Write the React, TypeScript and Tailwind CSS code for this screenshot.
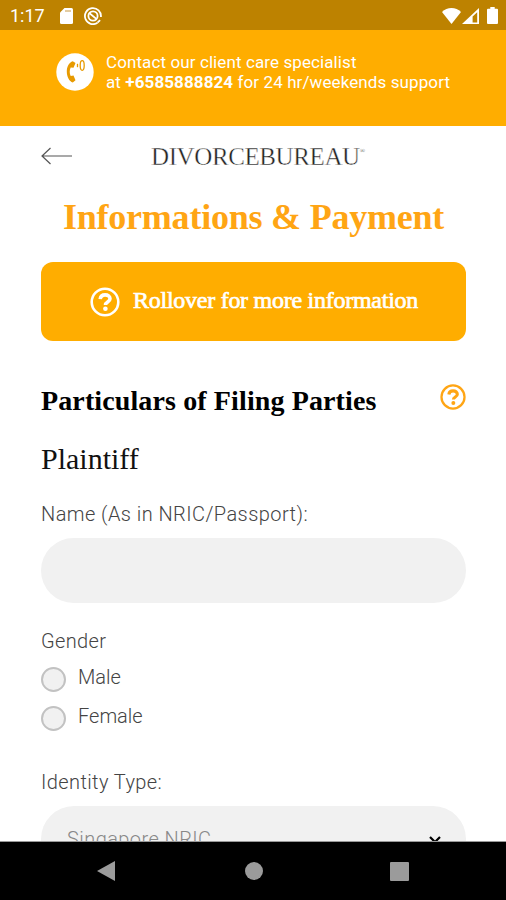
const HelpIcon = ({ className }: { className: string }) => (
  <svg viewBox="0 0 30 30" fill="none" stroke="currentColor" className={className}>
    <circle cx="15" cy="15" r="13.3" strokeWidth="2.6" />
    <path d="M10.2 12.1c.3-2.7 2.2-4.2 4.9-4.2 2.8 0 4.9 1.6 4.9 3.9 0 3.4-4.5 3.1-4.5 6.2" strokeWidth="3.6" />
    <circle cx="15.4" cy="21.8" r="2.3" fill="currentColor" stroke="none" />
  </svg>
);

const StatusBar = () => (
  <div className="flex h-[30px] shrink-0 items-center bg-[#bd8200] pt-px pr-[8px] pl-[10px] text-white">
    <span className="w-[50px] text-[18px] leading-none">1:17</span>
    <svg viewBox="0 0 13 16" className="h-4 w-[13px]" fill="currentColor">
      <path d="M4.5 0H11.5Q13 0 13 1.5V14.5Q13 16 11.5 16H1.5Q0 16 0 14.5V4.5Z" />
      <path d="M5 3h6" stroke="#dcc08a" strokeWidth="1.6" />
    </svg>
    <svg viewBox="0 0 18 18" className="ml-[11px] h-[18px] w-[18px]" fill="none" stroke="currentColor">
      <path d="M13.5 15.7A8 8 0 1 1 16.9 10" strokeWidth="1.8" />
      <circle cx="9" cy="9" r="4.6" strokeWidth="1.8" />
      <path d="M5.5 6.3l6.8 5.6M13.5 15.7l2.6-2.6" strokeWidth="1.8" />
    </svg>
    <svg viewBox="0 0 19 16" className="ml-auto h-4 w-[19px]" fill="currentColor">
      <path d="M9.5 16L0 4C5 -1.2 14 -1.2 19 4Z" />
    </svg>
    <svg viewBox="0 0 17 16" className="ml-px h-4 w-[17px]" fill="currentColor">
      <path d="M17 0V16H0ZM15.2 4.2L10.6 8.6V14.4H15.2Z" fillRule="evenodd" />
    </svg>
    <svg viewBox="0 0 11 17" className="ml-[8px] h-[17px] w-[11px]" fill="currentColor">
      <path d="M3.3 0H7.7V1.8H10Q11 1.8 11 2.8V16Q11 17 10 17H1Q0 17 0 16V2.8Q0 1.8 1 1.8H3.3Z" />
    </svg>
  </div>
);

const ContactBanner = () => (
  <div className="flex h-[95.5px] shrink-0 items-start bg-[#ffad00] pt-[22px] pl-[56px] text-white">
    <svg viewBox="0 0 38 38" className="mt-[0.5px] h-[38px] w-[38px]">
      <circle cx="19" cy="19" r="18.7" fill="#fff" />
      <path
        d="M16.8 8.2c-3.8 1.2-6 5.5-6 10.3 0 5.3 2.4 9.8 6 11l2.7-2.2-2-4.9-2.8.5c-1.3-2.7-1.3-5.8 0-8.5l2.8.3 2-4.6z"
        fill="#e79a00"
      />
      <g fill="none" stroke="#e79a00" strokeWidth="1.3">
        <ellipse cx="26.2" cy="12.5" rx="2" ry="4.8" />
        <path d="M21.5 10.8v3.4" />
      </g>
    </svg>
    <p className="ml-[12px] text-[17px] leading-[20px] tracking-[0.1px] whitespace-nowrap">
      Contact our client care specialist
      <br />
      at <b>+6585888824</b> for 24 hr/weekends support
    </p>
  </div>
);

const RadioOption = ({ label }: { label: string }) => (
  <label className="flex h-[39.5px] items-start">
    <span className="mt-[2px] h-[25px] w-[25px] rounded-full border-2 border-[#c2c2c2] bg-[#f1f1f1]" />
    <span className="ml-[12px] leading-[24px]">{label}</span>
  </label>
);

const NavBar = () => (
  <div className="flex h-[58px] shrink-0 items-center bg-black text-[#9b9b9b]">
    <svg viewBox="0 0 18 20" className="ml-[97px] h-5 w-[18px]" fill="currentColor">
      <path d="M18 0V20L0 10Z" />
    </svg>
    <span className="ml-[130px] h-[18px] w-[18px] rounded-full bg-[#9b9b9b]" />
    <span className="ml-[127px] h-[19px] w-[19px] rounded-[1px] bg-[#9b9b9b]" />
  </div>
);

const App = () => {
  return (
    <div className="flex h-[900px] w-[506px] flex-col overflow-hidden bg-white font-['Roboto',sans-serif]">
      <StatusBar />
      <ContactBanner />
      <main className="min-h-0 flex-1 overflow-hidden border-b border-[#999] pr-[40px] pl-[41px] text-[20px] font-light text-[#444]">
        <header className="flex h-[61px] items-center">
          <svg viewBox="0 0 31 18" className="h-[18px] w-[31px]" fill="none" stroke="#555" strokeWidth="1.2">
            <path d="M31 9H1M9.5 1L1 9l8.5 8" />
          </svg>
          <span className="ml-[79px] flex font-['Liberation_Serif',serif] text-[25px] leading-none font-normal tracking-[-0.4px] text-[#222] [-webkit-text-stroke:0.4px_white]">
            DIVORCEBUREAU
            <span className="text-[7px] leading-[14px] text-[#666] [-webkit-text-stroke:0]">®</span>
          </span>
        </header>
        <h1 className="h-[75.5px] pt-[9px] text-center font-['Liberation_Serif',serif] text-[36px] leading-[42px] font-bold tracking-[-0.22px] whitespace-nowrap text-[#ffa514]">
          Informations &amp; Payment
        </h1>
        <div className="flex h-[79px] items-center rounded-[12px] bg-[#ffad00] pl-[49px] text-white">
          <HelpIcon className="h-[30px] w-[30px]" />
          <span className="ml-[13px] pb-[3px] font-['Liberation_Serif',serif] text-[24px] leading-none font-normal tracking-[-0.26px] whitespace-nowrap [-webkit-text-stroke:0.7px_white]">
            Rollover for more information
          </span>
        </div>
        <div className="mt-[43px] flex h-[32px] items-start justify-between text-black">
          <h2 className="pt-px font-['Liberation_Serif',serif] text-[28px] leading-[32px] font-bold tracking-[0.12px] whitespace-nowrap">
            Particulars of Filing Parties
          </h2>
          <HelpIcon className="h-[26px] w-[26px] text-[#ffa514]" />
        </div>
        <h3 className="mt-[26.5px] font-['Liberation_Serif',serif] text-[30px] leading-[32px] font-normal text-[#111]">
          Plaintiff
        </h3>
        <div className="mt-[27px] leading-[24px] tracking-[0.44px]">Name (As in NRIC/Passport):</div>
        <div className="mt-[12px] h-[65px] rounded-full bg-[#f1f1f1]" />
        <div className="mt-[26px] mb-[12px] leading-[24px] tracking-[0.35px]">Gender</div>
        <RadioOption label="Male" />
        <RadioOption label="Female" />
        <div className="mt-[26px] leading-[24px] tracking-[0.4px]">Identity Type:</div>
        <div className="mt-[12px] flex h-[66px] items-center justify-between rounded-full bg-[#f1f1f1] pr-[25px] pl-[26px] text-[#888]">
          <span className="tracking-[0.43px]">Singapore NRIC</span>
          <svg viewBox="0 0 12 8" className="mt-[2px] h-2 w-3" fill="none" stroke="#000" strokeWidth="2.2">
            <path d="M1 1l5 5 5-5" />
          </svg>
        </div>
      </main>
      <NavBar />
    </div>
  );
};

export default App;
